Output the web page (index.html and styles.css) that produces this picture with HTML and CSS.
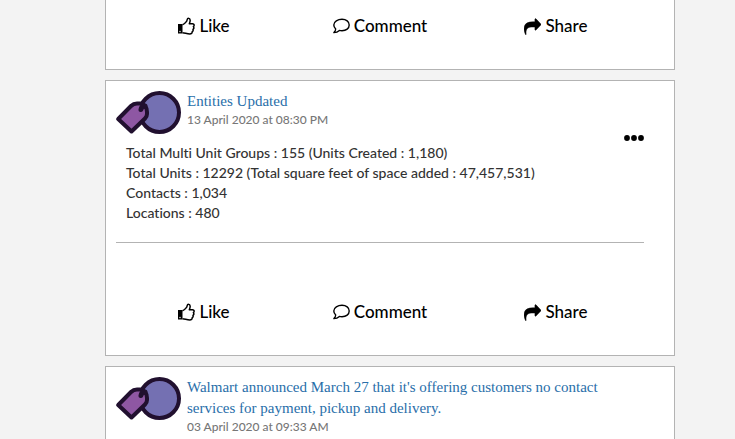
FILE: index.html
```html
<!DOCTYPE html>
<html lang="en">
<head>
  <meta charset="UTF-8" />
  <meta name="viewport" content="width=device-width, initial-scale=1.0"/>
  <title>News Feed</title>
  <link rel="stylesheet" href="styles.css">
</head>
<body>

  <svg class="sprite" aria-hidden="true">
    <symbol id="logo" viewBox="0 0 65 43">
      <circle cx="43.500" cy="21.500" r="19.500" fill="#7470b2" stroke="#21102f" stroke-width="4"/>
      <path d="M2.200 28 L15 15 Q17.500 12.500 21 12.500 H24 Q31 14 31 21 V23 Q31 25.500 29 27.500 L15.500 40.500 Z" fill="#8e57a3" stroke="#21102f" stroke-width="4" stroke-linejoin="round"/>
      <path d="M25 18.500 Q25.500 15 29 15" fill="none" stroke="#21102f" stroke-width="5" stroke-linecap="round"/>
    </symbol>
    <symbol id="like" viewBox="0 0 17 18">
      <path d="M0 7 H4.500 V16.500 H0 Z" fill="currentColor"/>
      <circle cx="2" cy="14.500" r="0.700" fill="#fff"/>
      <path d="M4.500 7.700 C6.500 7.300 7.600 5.500 8.600 4.300 C9.300 3.300 9 1.200 10.300 1.200 C12.800 1.200 12.400 4.200 11.300 6.700 H14.600 C16.300 6.700 16.600 8.600 15.400 9.600 C16.100 10.600 15.900 11.700 15 12.400 C15.400 13.500 15 14.300 14.100 14.800 C14.300 16.400 13.200 16.900 11.800 16.900 C8.800 16.900 7 15.800 4.500 15.700" fill="none" stroke="currentColor" stroke-width="1.500" stroke-linejoin="round"/>
    </symbol>
    <symbol id="comment" viewBox="0 0 17 18">
      <path d="M9 2.300 C13.200 2.300 16.200 4.700 16.200 8 C16.200 11.300 13.200 13.700 9 13.700 C8 13.700 7.200 13.600 6.400 13.400 C5 14.700 3.200 15.500 0.900 15.600 C2 14.500 2.600 13.300 2.700 12 C1.500 10.900 0.800 9.500 0.800 8 C0.800 4.700 4.800 2.300 9 2.300 Z" fill="none" stroke="currentColor" stroke-width="1.400" stroke-linejoin="round"/>
    </symbol>
    <symbol id="share" viewBox="0 -100 1792 1792" preserveAspectRatio="none">
      <path fill="currentColor" stroke="currentColor" stroke-width="50" d="M1792 640q0 26-19 45l-512 512q-19 19-45 19t-45-19-19-45V896H928q-98 0-175.500 6t-154 21.500-133 42.500-105.500 69.500-80 101-48.500 138.500-17.500 181q0 55 5 123 0 6 2.500 23.500t2.500 26.500q0 15-8.500 25t-23.500 10q-16 0-28-17-7-9-13-22t-13.500-30-10.500-24Q0 1286 0 1120q0-199 53-333 162-403 875-403h224V128q0-26 19-45t45-19 45 19l512 512q19 19 19 45z"/>
    </symbol>
    <symbol id="dots" viewBox="0 0 20 8">
      <circle cx="3" cy="4" r="2.900"/><circle cx="10" cy="4" r="2.900"/><circle cx="17" cy="4" r="2.900"/>
    </symbol>
  </svg>

  <main class="feed">
    <article class="post post-scrolled">
      <div class="actions">
        <button type="button"><svg class="icon"><use href="#like"/></svg>Like</button>
        <button type="button"><svg class="icon"><use href="#comment"/></svg>Comment</button>
        <button type="button"><svg class="icon"><use href="#share"/></svg>Share</button>
      </div>
    </article>

    <article class="post">
      <header class="post-header">
        <svg class="logo" role="img" aria-label="Logo"><use href="#logo"/></svg>
        <div>
          <a class="title" href="#">Entities Updated</a>
          <div class="date">13 April 2020 at 08:30 PM</div>
        </div>
      </header>
      <div class="post-body">
        <p class="text">
          Total Multi Unit Groups : 155 (Units Created : 1,180)<br>
          Total Units : 12292 (Total square feet of space added : 47,457,531)<br>
          Contacts : 1,034<br>
          Locations : 480
        </p>
        <button type="button" class="menu" aria-label="More options"><svg><use href="#dots"/></svg></button>
      </div>
      <div class="actions">
        <button type="button"><svg class="icon"><use href="#like"/></svg>Like</button>
        <button type="button"><svg class="icon"><use href="#comment"/></svg>Comment</button>
        <button type="button"><svg class="icon"><use href="#share"/></svg>Share</button>
      </div>
    </article>

    <article class="post post-last">
      <header class="post-header">
        <svg class="logo" role="img" aria-label="Logo"><use href="#logo"/></svg>
        <div>
          <a class="title" href="#">Walmart announced March 27 that it's offering customers no contact services for payment, pickup and delivery.</a>
          <div class="date">03 April 2020 at 09:33 AM</div>
        </div>
      </header>
    </article>
  </main>

</body>
</html>
```
FILE: styles.css
```css
* {
  box-sizing: border-box;
}
body {
  margin: 0;
  background: #f3f3f3;
  font-family: Lato, sans-serif;
  font-weight: 500;
  font-variant-ligatures: none;
}
.sprite {
  display: none;
}
.feed {
  display: flex;
  flex-direction: column;
  gap: 10px;
  padding: 0 60px 0 105px;
}
.post {
  background: #fff;
  border: 1px solid #b3b3b3;
  padding: 10px 30px 0 10px;
}
.post-scrolled {
  border-top: none;
  padding-top: 0;
}
.post-last {
  border-bottom: none;
  padding-bottom: 10px;
}
.post-header {
  display: flex;
  align-items: flex-start;
  gap: 6px;
}
.logo {
  flex: none;
  width: 65px;
  height: 43px;
}
.title {
  display: block;
  font-family: "Liberation Serif", serif;
  font-size: 15px;
  font-weight: 400;
  line-height: 21px;
  color: #286ea9;
  text-decoration: none;
}
.date {
  font-size: 12px;
  line-height: 16px;
  color: #777;
}
.post-body {
  display: flex;
  justify-content: space-between;
  align-items: flex-start;
  border-bottom: 1px solid #b3b3b3;
}
.text {
  margin: 0;
  padding: 9px 0 19px 10px;
  font-size: 14px;
  line-height: 20px;
  color: #333;
}
button {
  background: none;
  border: none;
  padding: 0;
  font: inherit;
  color: #000;
  cursor: pointer;
}
.menu svg {
  display: block;
  width: 20px;
  height: 8px;
}
.actions {
  display: grid;
  grid-template-columns: repeat(3, 1fr);
  padding: 56px 0 30px;
}
.post-scrolled .actions {
  padding-top: 13px;
}
.actions button {
  display: flex;
  justify-content: center;
  align-items: center;
  gap: 4px;
  font-size: 17px;
  line-height: 26px;
}
.icon {
  width: 17px;
  height: 18px;
}
```
